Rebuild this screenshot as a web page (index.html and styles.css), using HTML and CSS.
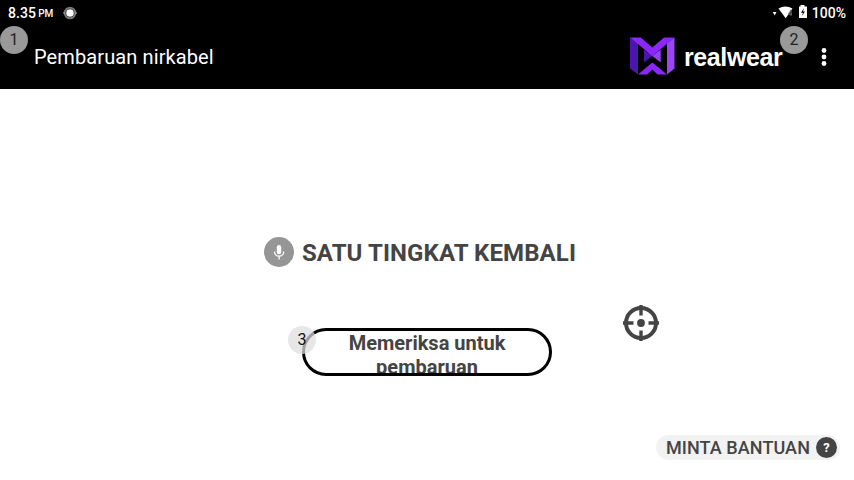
FILE: index.html
```html
<!DOCTYPE html>
<html lang="id">
<head>
<meta charset="utf-8">
<title>Pembaruan nirkabel</title>
<link rel="stylesheet" href="styles.css">
</head>
<body>
<div class="screen">
  <header class="top">
    <div class="status">
      <span class="time">8.35</span><span class="pm">PM</span>
      <svg class="dot" width="14" height="14" viewBox="0 0 14 14"><circle cx="7" cy="7" r="5.300" fill="none" stroke="#777" stroke-width="2"/><path d="M0 7h2M12 7h2" stroke="#aaa"/><circle cx="7" cy="7" r="3.800" fill="#fff"/></svg>
      <svg class="signals" width="36" height="16" viewBox="0 0 36 16">
        <path d="M.8 7h3.700L2.700 10.500z" fill="#fff"/>
        <path d="M6.500 3.600Q13.500-.4 20.500 3.600L13.700 13.200z" fill="#fff"/>
        <path d="M19 4.500l-2.500 4.500h3.500M19 5v6" fill="none" stroke="#777" stroke-width="1"/>
        <path d="M27 1.500h1.500V0h4v1.500H35V13h-8z" fill="#fff"/>
        <path d="M32 3l-3 4.700h2L30 11l3-4.600h-2z" fill="#000"/>
      </svg>
      <span class="percent">100%</span>
    </div>
    <div class="bar">
      <h1 class="title">Pembaruan nirkabel</h1>
      <svg class="logo" width="45" height="38" viewBox="0 0 45 38">
        <path d="M0 .5L8 6.500V37.500L0 31.500z" fill="#4a16ad"/>
        <path d="M44.500.5L37 6.500V37.500L44.500 31.500z" fill="#9b45f7"/>
        <path d="M14 12.500L22.300 19 14 25.500z" fill="#4a16ad"/>
        <path d="M30.700 12.500L22.300 19 30.700 25.500z" fill="#9640f2"/>
        <path d="M18 15.500L22.300 12l4.400 3.500-4.400 3.700z" fill="#7422d4"/>
        <path d="M0 .5H10.800L22.300 10.500 34 .5H44.500L22.300 19z" fill="#8b27fb"/>
        <path d="M8 37.500L22.300 25.500 37 37.500H27.500L22.300 32.500 17.200 37.500z" fill="#8b27fb"/>
      </svg>
      <span class="brand">realwear</span>
      <svg class="more" width="6" height="20" viewBox="0 0 6 20" fill="#fff"><circle cx="3" cy="3.500" r="2.400"/><circle cx="3" cy="10" r="2.400"/><circle cx="3" cy="16.500" r="2.400"/></svg>
    </div>
  </header>
  <main class="content">
    <div class="back">
      <svg width="30" height="30" viewBox="0 0 30 30"><circle cx="15" cy="15" r="15" fill="#969696"/><rect x="12.800" y="8" width="4.400" height="9.300" rx="2.200" fill="#fff"/><path d="M10.500 14.600a4.600 4.600 0 0 0 9.200 0M15.100 19.200v3.300" fill="none" stroke="#fff" stroke-width="1.300"/></svg>
      <span>SATU TINGKAT KEMBALI</span>
    </div>
    <button class="check"><span>Memeriksa untuk<br>pembaruan</span></button>
    <div class="help"><span>MINTA BANTUAN</span><i>?</i></div>
  </main>
  <svg class="target" width="36" height="36" viewBox="0 0 36 36" fill="none" stroke="#444"><circle cx="18" cy="18" r="15" stroke-width="4"/><path d="M18 0v10.500M18 25.500V36M0 18h10.500M25.500 18H36" stroke-width="3.400"/><circle cx="18" cy="18" r="3.900" fill="#444" stroke="none"/></svg>
  <span class="badge one">1</span>
  <span class="badge two">2</span>
  <span class="badge three">3</span>
</div>
</body>
</html>
```
FILE: styles.css
```css
* { box-sizing: border-box; }
body { margin: 0; font-family: Roboto, "Liberation Sans", sans-serif; background: #fff; }
.screen { position: relative; width: 854px; height: 480px; overflow: hidden; display: flex; flex-direction: column; }
.top { height: 89px; background: #000; color: #fff; }
.status { height: 25px; display: flex; align-items: center; padding: 0 8px; font-weight: 500; font-size: 14px; }
.time { letter-spacing: .1px; }
.pm { font-size: 10px; margin: 2px 0 0 2px; }
.dot { margin-left: 10px; }
.signals { margin-left: auto; margin-right: 4px; margin-top: 1px; }
.bar { height: 64px; display: flex; align-items: center; padding: 0 28px 0 34px; }
.title { margin: 0 auto 0 0; font-size: 20px; font-weight: 400; line-height: 24px; letter-spacing: .11px; }
.logo { margin: -2px 9px 0 0; }
.brand { width: 100px; font: bold 25px/26px "Liberation Sans", sans-serif; letter-spacing: -.4px; }
.more { margin: -1px -1px 0 37px; }
.content { flex: 1; display: flex; flex-direction: column; align-items: center; color: #444; }
.back { margin: 148px 14px 0 0; height: 30px; display: flex; align-items: center; gap: 8px; font-weight: 700; font-size: 24px; letter-spacing: .1px; white-space: nowrap; }
.back span { padding-top: 2px; }
.check { margin-top: 61px; width: 250px; height: 48px; border: 3px solid #000; border-radius: 24px; background: #fff; color: #444; padding: 0; overflow: hidden; display: flex; justify-content: center; align-items: flex-start; font: 700 20px/24px Roboto, sans-serif; text-align: center; }
.help { align-self: flex-end; margin: 59px 14px 0 0; height: 25px; padding: 0 3px 0 10px; border-radius: 13px; background: #f2f2f2; display: flex; align-items: center; gap: 6px; font-weight: 500; font-size: 18px; letter-spacing: .08px; white-space: nowrap; }
.help i { width: 21px; height: 21px; border-radius: 50%; background: #444; color: #fff; font: 700 13px/21px Roboto, sans-serif; text-align: center; }
.target { position: absolute; left: 623px; top: 305px; }
.badge { position: absolute; width: 28px; height: 28px; border-radius: 50%; background: #999; color: #222; font-size: 16px; line-height: 28px; text-align: center; }
.one { left: 0; top: 26px; }
.two { left: 780px; top: 26px; }
.three { left: 288px; top: 326px; background: rgba(222, 222, 222, .72); color: #111; }
```
